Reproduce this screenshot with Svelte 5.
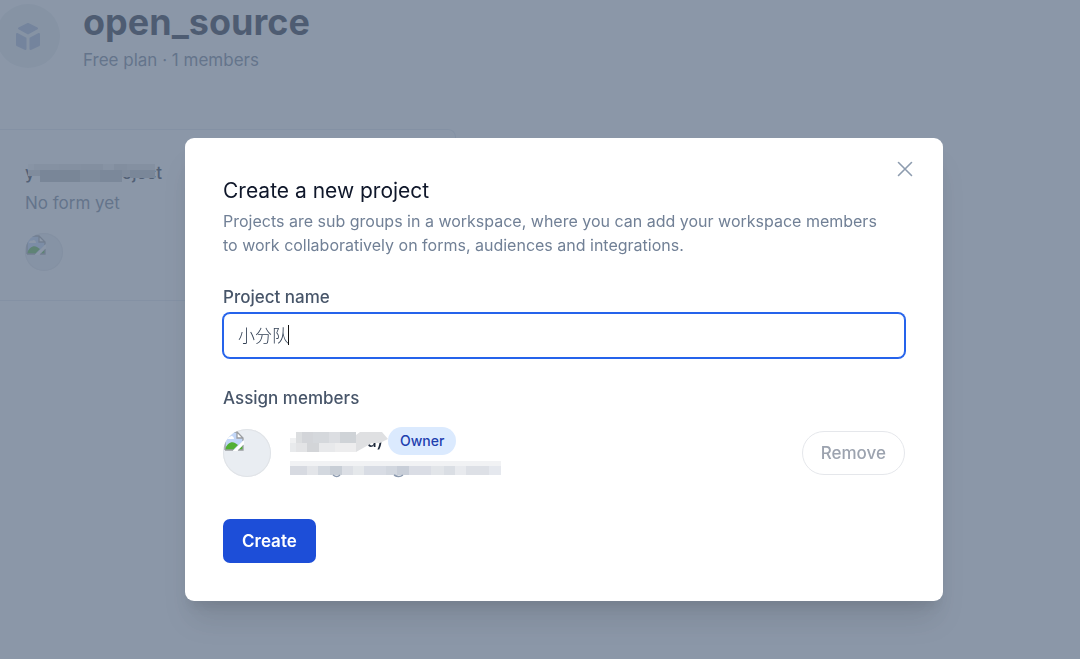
<script>
  let projectName = $state('小分队');
  let field;
  $effect(() => {
    field?.focus();
    field?.setSelectionRange(projectName.length, projectName.length);
  });

  // Redaction tiles: x, y, width, height, colour
  const projectTiles = [
    [3, 3, 7, 6, '#f2f2f2'], [9, 3, 25, 6, '#e6e6e6'], [34, 3, 22, 6, '#e4e4e4'], [56, 3, 22, 6, '#dedede'],
    [78, 3, 11, 6, '#eeeeee'], [89, 3, 13, 6, '#dcdcdc'], [102, 3, 28, 6, '#e4e4e4'],
    [3, 9, 12, 6, '#d4d4d4'], [15, 9, 20, 12, '#b8bcbe'], [35, 9, 20, 12, '#b6babd'], [55, 9, 20, 12, '#cacdd0'],
    [75, 9, 22, 12, '#c0c4c6'], [97, 9, 8, 7, '#d4d4d4'], [105, 9, 25, 8, '#bcc0c4']
  ];
  const nameTiles = [
    [0, 6, 6, 5, '#f0f1f2'], [6, 0, 6, 11, '#dcdee0'], [12, 0, 11, 11, '#d3d5d9'], [23, 0, 16, 11, '#d5d8dc'],
    [39, 0, 11, 11, '#dcdee2'], [50, 0, 16, 11, '#cfd3d7'], [0, 11, 6, 9, '#e8eaec'], [6, 11, 11, 9, '#e3e4e6'],
    [17, 11, 12, 9, '#d3d5d8'], [29, 11, 16, 9, '#e8e9eb'], [45, 11, 21, 9, '#ededee']
  ];
  const emailTiles = [
    [0, 5, 17, 9, '#d7dae1'], [17, 5, 11, 9, '#e3e5e9'], [28, 5, 12, 9, '#d3d8df'], [40, 5, 12, 9, '#c8ced6'],
    [52, 5, 11, 9, '#dcdfe5'], [63, 5, 11, 9, '#e5e8eb'], [74, 5, 22, 9, '#d8dce4'], [96, 5, 11, 9, '#d2d7df'],
    [107, 5, 12, 9, '#c8ced8'], [119, 5, 22, 9, '#dadde5'], [141, 5, 13, 9, '#e2e5e9'], [154, 5, 11, 9, '#dadee4'],
    [165, 5, 11, 9, '#e8eaee'], [176, 5, 23, 9, '#dde0e6'], [199, 5, 12, 9, '#e5e8ee']
  ];
</script>

{#snippet brokenImage()}
  <svg class="broken" width="20" height="20" viewBox="0 0 20 20" aria-hidden="true">
    <path d="M1 1h12l6 6v3l-9 9H1z" fill="#c3d7f8" />
    <path d="M3 8c0-2 2-3 3-2 1-2 4-1 4 2z" fill="#fff" />
    <path d="M1 18c2-5 6-8 10-6l3 2-5 5H1z" fill="#52b035" />
    <path d="M19 14v5h-5z" fill="#52b035" />
    <path d="M13 1v6h6z" fill="#fff" />
    <path d="M1 19V1h12l6 6v3M1 19h8M13 1v6h6M14 19h5v-5" fill="none" stroke="#9a9da1" stroke-width="1.3" />
    <path d="M20 9 9 20h4l7-7z" fill="#fff" />
  </svg>
{/snippet}

<div class="page">
  <header class="workspace">
    <span class="logo">
      <svg width="26" height="29" viewBox="0 0 26 29" fill="#a4b2d2" stroke="#a4b2d2" stroke-width="2" stroke-linejoin="round" aria-hidden="true">
        <path d="M13 2 22 6.500 13 11.500 4 6.500z" />
        <path d="M2 12 10.500 16.500V27L2 23z" />
        <path d="M24 12 15.500 16.500V27L24 23z" />
      </svg>
    </span>
    <div>
      <h1>open_source</h1>
      <p>Free plan · 1 members</p>
    </div>
  </header>
  <section class="project">
    <h2 class="redacted">
      <span>y</span><span>oject</span>
      <svg class="tiles" width="140" height="26" aria-hidden="true">
        {#each projectTiles as [x, y, w, h, c]}<rect {x} {y} width={w} height={h} fill={c} />{/each}
      </svg>
    </h2>
    <p>No form yet</p>
    <span class="avatar small">{@render brokenImage()}</span>
  </section>
</div>

<div class="overlay">
  <div class="modal" role="dialog" aria-modal="true" aria-labelledby="title">
    <button class="close" aria-label="Close">
      <svg width="16" height="16" viewBox="0 0 16 16" fill="none" stroke="#8d9caf" stroke-width="1.600" stroke-linecap="round" aria-hidden="true">
        <path d="M1.500 1.500l13 13M14.500 1.500l-13 13" />
      </svg>
    </button>
    <h2 id="title">Create a new project</h2>
    <p class="description">Projects are sub groups in a workspace, where you can add your workspace members to work collaboratively on forms, audiences and integrations.</p>

    <label for="name">Project name</label>
    <div class="field">
      <input id="name" type="text" bind:value={projectName} bind:this={field} />
      <span class="caret" style:left="calc(14px + {projectName.length}em)"></span>
    </div>

    <h3>Assign members</h3>
    <div class="member">
      <span class="avatar">{@render brokenImage()}</span>
      <div class="details">
        <div class="name-row">
          <span class="name redacted">
            <span>u)</span>
            <svg class="tiles" width="98" height="26" aria-hidden="true">
              {#each nameTiles as [x, y, w, h, c]}<rect {x} y={y + 3} width={w} height={h} fill={c} />{/each}
              <path d="M66 6l4-3h22l6 7-8 4h-8l-16 9z" fill="#dfe0e2" />
            </svg>
          </span>
          <span class="badge">Owner</span>
        </div>
        <svg class="email" width="211" height="18" aria-hidden="true">
          <rect width="211" height="5" fill="#f1f2f4" />
          {#each emailTiles as [x, y, w, h, c]}<rect {x} {y} width={w} height={h} fill={c} />{/each}
          <path d="M43 14q4 3 7 0M104 14q5 3 9 0" fill="none" stroke="#8c9aaf" stroke-width="1.500" />
        </svg>
      </div>
      <button class="remove">Remove</button>
    </div>
    <button class="create">Create</button>
  </div>
</div>

<style>
  :global(body) {
    margin: 0;
    background: #fff;
    overflow: hidden;
  }
  .page, .overlay, button, input {
    font-family: Inter, "Noto Sans CJK SC", sans-serif;
  }
  .page, .overlay {
    font-size: 17px;
    line-height: 24px;
  }
  h1, h2, h3, p { margin: 0; }
  button { cursor: pointer; }
  .workspace {
    display: flex;
    align-items: flex-start;
    gap: 23px;
    height: 129px;
  }
  .logo {
    display: flex;
    align-items: center;
    justify-content: center;
    width: 64px;
    height: 64px;
    margin: 4px 0 0 -4px;
    border-radius: 50%;
    background: #e9eef0;
  }
  .workspace h1 {
    padding-bottom: 4px;
    color: #0f172a;
    font-size: 36px;
    line-height: 44px;
    font-weight: 700;
  }
  .workspace p, .project p { color: #64748b; }
  .project {
    width: 456px;
    height: 172px;
    box-sizing: border-box;
    padding: 31px 25px;
    border: 1px solid #e2e8f0;
    border-left: 0;
    border-radius: 0 8px 8px 0;
  }
  .redacted {
    position: relative;
    display: flex;
    justify-content: space-between;
    color: #1e293b;
    font-size: 17px;
    line-height: 24px;
    font-weight: 500;
  }
  .project h2 { width: 137px; }
  .project p { margin-top: 6px; }
  .tiles {
    position: absolute;
    left: 0;
    top: 0;
  }
  .avatar {
    flex: none;
    display: block;
    width: 48px;
    height: 48px;
    border-radius: 50%;
    overflow: hidden;
    background: #e9edf2;
    box-shadow: inset 0 0 0 1px #e0e3e7;
  }
  .avatar.small {
    width: 38px;
    height: 38px;
    margin-top: 18px;
  }
  .broken {
    display: block;
    margin: 2px 1px;
  }
  .overlay {
    position: fixed;
    inset: 0;
    box-sizing: border-box;
    display: flex;
    justify-content: center;
    align-items: flex-start;
    padding: 138px 0 24px 48px;
    background: rgba(100, 116, 139, 0.75);
    overflow: hidden;
  }
  .modal {
    position: relative;
    box-sizing: border-box;
    width: 100%;
    max-width: 758px;
    padding: 38px;
    border-radius: 9px;
    background: #fff;
    box-shadow: 0 24px 30px -6px rgba(0, 0, 0, 0.1), 0 10px 12px -5px rgba(0, 0, 0, 0.08);
  }
  .close {
    position: absolute;
    top: 19px;
    right: 26px;
    display: flex;
    padding: 4px;
    border: 0;
    background: none;
  }
  .modal h2 {
    color: #0f172a;
    font-size: 21px;
    line-height: 30px;
    font-weight: 400;
    font-optical-sizing: none;
  }
  .description {
    margin-top: 3px;
    padding-right: 20px;
    color: #718096;
    font-size: 16px;
    font-optical-sizing: none;
  }
  label, h3 {
    display: block;
    color: #475569;
    font-size: 17px;
    line-height: 24px;
    font-weight: 500;
  }
  label { margin-top: 28px; }
  .field {
    position: relative;
    margin-top: 4px;
  }
  input {
    display: block;
    box-sizing: border-box;
    width: 100%;
    height: 45px;
    padding: 0 14px 3px;
    border: 1px solid #2563eb;
    border-radius: 7px;
    outline: 0;
    box-shadow: 0 0 0 1px #2563eb;
    caret-color: transparent;
    color: #334155;
    background: #fff;
    font-size: 17px;
    font-weight: 300;
  }
  .caret {
    position: absolute;
    top: 12px;
    width: 1px;
    height: 20px;
    background: #111;
    pointer-events: none;
  }
  h3 { margin-top: 28px; }
  .member {
    display: flex;
    align-items: center;
    gap: 19px;
    margin-top: 17px;
  }
  .details { flex: 1; }
  .name-row {
    display: flex;
    align-items: center;
  }
  .name {
    width: 98px;
    justify-content: flex-end;
  }
  .name > span { margin-right: 5px; }
  .badge {
    padding: 2px 12px;
    border-radius: 14px;
    background: #dbeafe;
    color: #1e40af;
    font-size: 14px;
    font-weight: 500;
    font-optical-sizing: none;
  }
  .email {
    display: block;
    margin-top: 6px;
  }
  .remove {
    height: 44px;
    padding: 0 18px;
    border: 1px solid #e5e7eb;
    border-radius: 22px;
    background: #fff;
    color: #9ca3af;
    font-size: 17px;
    font-weight: 500;
  }
  .create {
    display: block;
    height: 44px;
    margin-top: 40px;
    padding: 0 19px;
    border: 0;
    border-radius: 7px;
    background: #1d4ed8;
    color: #fff;
    font-size: 17px;
    font-weight: 600;
  }
</style>
